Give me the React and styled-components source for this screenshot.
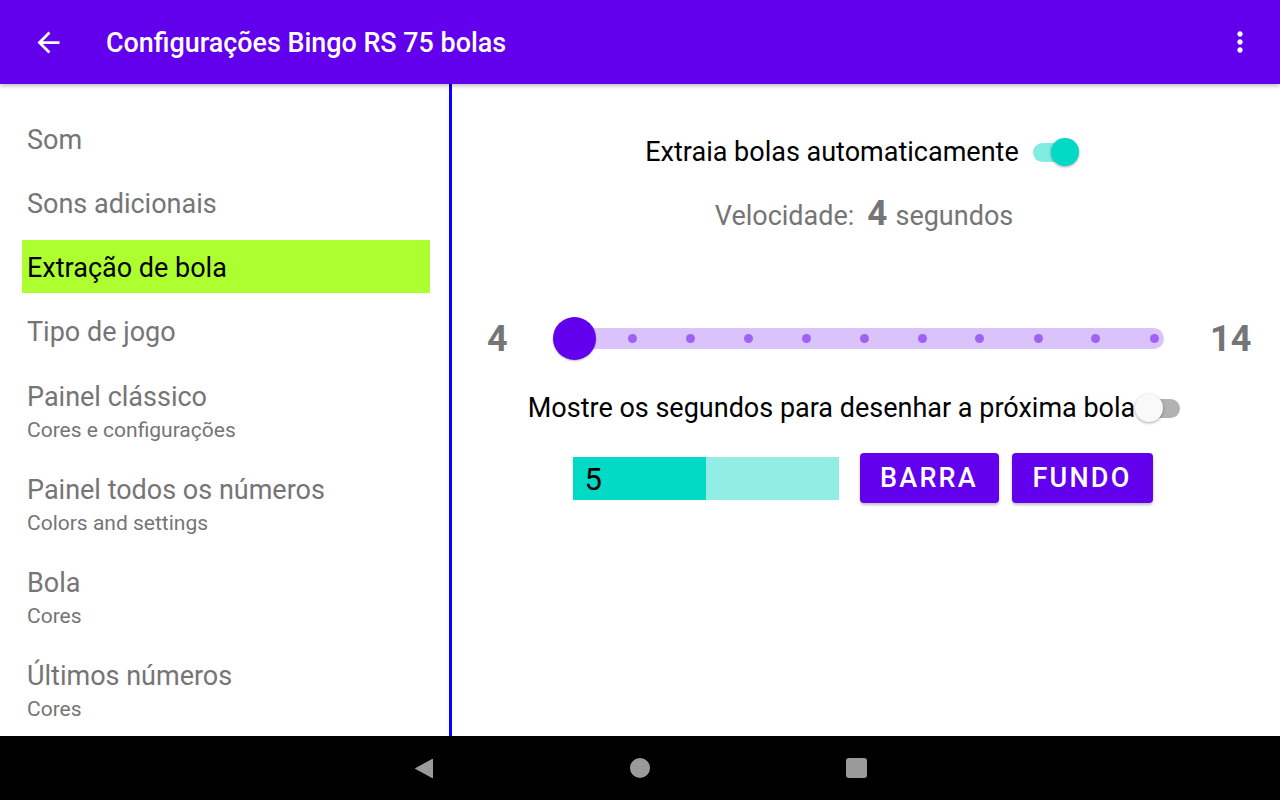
import React from 'react';
import styled, { createGlobalStyle } from 'styled-components';

const GlobalStyle = createGlobalStyle`
  html, body {
    margin: 0;
    padding: 0;
    height: 100%;
    overflow: hidden;
  }
  body {
    font-family: Roboto, "Noto Sans", sans-serif;
    background: #fff;
  }
`;

const Screen = styled.div`
  width: 1280px;
  height: 800px;
  display: flex;
  flex-direction: column;
`;

const AppBar = styled.header`
  height: 84px;
  flex: none;
  background: #6200ee;
  display: flex;
  align-items: center;
  padding: 0 24px 0 32px;
  box-shadow: 0 2px 4px rgba(0, 0, 0, 0.25);
  position: relative;
  z-index: 2;
  color: #fff;
`;

const IconButton = styled.div`
  width: 33px;
  height: 33px;
  display: flex;
  align-items: center;
  justify-content: center;
  flex: none;
`;

const Title = styled.h1`
  margin: 2px 0 0 41px;
  flex: 1;
  font-size: 26.9px;
  font-weight: 500;
`;

const Body = styled.main`
  flex: 1;
  display: flex;
  min-height: 0;
`;

const SideList = styled.nav`
  width: 452px;
  flex: none;
  box-sizing: border-box;
  border-right: 3px solid #0800ff;
  padding-top: 28px;
  display: flex;
  flex-direction: column;
  gap: 11px;
`;

const Item = styled.div`
  margin: 0 19px 0 22px;
  padding: ${(p) => (p.$sub ? '13px 5px 8px' : '2px 5px 0')};
  min-height: 53px;
  box-sizing: border-box;
  display: flex;
  flex-direction: column;
  justify-content: ${(p) => (p.$sub ? 'flex-start' : 'center')};
  background: ${(p) => (p.$active ? '#adff2f' : 'transparent')};
`;

const ItemTitle = styled.div`
  font-size: 27px;
  line-height: 32px;
  color: ${(p) => (p.$active ? '#000' : '#757575')};
`;

const ItemSub = styled.div`
  margin-top: 5px;
  font-size: 21px;
  line-height: 24px;
  color: #757575;
`;

const Pane = styled.section`
  flex: 1;
  display: flex;
  flex-direction: column;
  align-items: center;
  padding-top: 48px;
`;

const Row = styled.div`
  height: ${(p) => p.$h || 40}px;
  margin-top: ${(p) => p.$mt || 0}px;
  margin-right: ${(p) => p.$shift || 0}px;
  display: flex;
  align-items: center;
  justify-content: center;
  gap: ${(p) => p.$gap || 0}px;
  flex: none;
`;

const Label = styled.span`
  font-size: 27px;
  color: #000;
`;

const Speed = styled.div`
  font-size: 27px;
  color: #757575;
  display: flex;
  align-items: baseline;
`;

const SpeedValue = styled.b`
  font-size: 35px;
  font-weight: 700;
  margin: 0 8px 0 13px;
`;

const SwitchWrap = styled.div`
  position: relative;
  width: 47px;
  height: 28px;
  flex: none;
`;

const SwitchTrack = styled.div`
  position: absolute;
  left: 1px;
  right: 2px;
  top: 5px;
  height: 19px;
  border-radius: 10px;
  background: ${(p) => (p.$on ? '#81ece2' : '#b2b2b2')};
`;

const SwitchThumb = styled.div`
  position: absolute;
  top: 0;
  ${(p) => (p.$on ? 'right: 0;' : 'left: 0;')}
  width: 28px;
  height: 28px;
  border-radius: 50%;
  background: ${(p) => (p.$on ? '#03dac5' : '#f9f9f9')};
  box-shadow: 0 1px 3px rgba(0, 0, 0, 0.35);
`;

const SliderRow = styled.div`
  align-self: stretch;
  margin-top: 83px;
  height: 44px;
  display: grid;
  grid-template-columns: 20px 1fr 40px;
  column-gap: 45px;
  align-items: center;
  padding: 0 30px 0 35px;
`;

const SliderLabel = styled.span`
  font-size: 36px;
  font-weight: 700;
  color: #757575;
  text-align: ${(p) => p.$align || 'left'};
  line-height: 44px;
  margin-top: 1px;
`;

const SliderTrack = styled.div`
  position: relative;
  height: 21px;
  border-radius: 11px;
  background: #d9c3fa;
  margin: 0 1px 0 1px;
`;

const Tick = styled.span`
  position: absolute;
  top: 6px;
  width: 9px;
  height: 9px;
  border-radius: 50%;
  background: #9f62f2;
`;

const SliderThumb = styled.span`
  position: absolute;
  top: -11px;
  width: 43px;
  height: 43px;
  margin-left: -21px;
  border-radius: 50%;
  background: #6200ee;
  box-shadow: 0 1px 2px rgba(0, 0, 0, 0.25);
`;

const Progress = styled.div`
  width: 266px;
  height: 43px;
  background: #92ede5;
  position: relative;
  display: flex;
  align-items: center;
`;

const ProgressFill = styled.div`
  position: absolute;
  left: 0;
  top: 0;
  bottom: 0;
  background: #03dac5;
`;

const ProgressText = styled.span`
  position: relative;
  font-size: 31px;
  color: #000;
  padding-left: 12px;
  margin-top: 2px;
`;

const Button = styled.button`
  height: 50px;
  width: ${(p) => p.$w}px;
  border: none;
  border-radius: 4px;
  background: #6200ee;
  color: #fff;
  font-family: Roboto, sans-serif;
  font-weight: 500;
  font-size: 27px;
  letter-spacing: 2.2px;
  box-shadow: 0 2px 3px rgba(0, 0, 0, 0.25);
  padding: 0;
`;

const NavBar = styled.footer`
  height: 64px;
  flex: none;
  background: #000;
  display: flex;
  align-items: center;
  justify-content: center;
  gap: 196px;
`;

const items = [
  { title: 'Som' },
  { title: 'Sons adicionais' },
  { title: 'Extração de bola', active: true },
  { title: 'Tipo de jogo' },
  { title: 'Painel clássico', sub: 'Cores e configurações' },
  { title: 'Painel todos os números', sub: 'Colors and settings' },
  { title: 'Bola', sub: 'Cores' },
  { title: 'Últimos números', sub: 'Cores' },
];

const Switch = ({ on }) => (
  <SwitchWrap>
    <SwitchTrack $on={on} />
    <SwitchThumb $on={on} />
  </SwitchWrap>
);

// track inset: thumb centre sits 21px from the left end, last step 10px from the right
const stepPos = (f) => `calc(21px + (100% - 31px) * ${f})`;

export default function App() {
  const min = 4;
  const max = 14;
  const value = 4;
  const steps = Array.from({ length: max - min }, (_, i) => i + 1);
  const fillPct = 50;

  return (
    <Screen>
      <GlobalStyle />
      <AppBar>
        <IconButton>
          <svg width="33" height="33" viewBox="0 0 24 24" fill="#fff">
            <path d="M20 11H7.83l5.59-5.59L12 4l-8 8 8 8 1.41-1.41L7.83 13H20v-2z" />
          </svg>
        </IconButton>
        <Title>Configurações Bingo RS 75 bolas</Title>
        <svg width="32" height="32" viewBox="0 0 24 24" fill="#fff">
          <path d="M12 8c1.1 0 2-.9 2-2s-.9-2-2-2-2 .9-2 2 .9 2 2 2zm0 2c-1.1 0-2 .9-2 2s.9 2 2 2 2-.9 2-2-.9-2-2-2zm0 6c-1.1 0-2 .9-2 2s.9 2 2 2 2-.9 2-2-.9-2-2-2z" />
        </svg>
      </AppBar>

      <Body>
        <SideList>
          {items.map((it) => (
            <Item key={it.title} $sub={!!it.sub} $active={it.active}>
              <ItemTitle $active={it.active}>{it.title}</ItemTitle>
              {it.sub && <ItemSub>{it.sub}</ItemSub>}
            </Item>
          ))}
        </SideList>

        <Pane>
          <Row $gap={13} $shift={8}>
            <Label>Extraia bolas automaticamente</Label>
            <Switch on />
          </Row>
          <Row $mt={21} $shift={4}>
            <Speed>
              Velocidade:<SpeedValue>{value}</SpeedValue>segundos
            </Speed>
          </Row>

          <SliderRow>
            <SliderLabel>{min}</SliderLabel>
            <SliderTrack>
              {steps.map((s) => (
                <Tick key={s} style={{ left: stepPos(s / (max - min)), marginLeft: -4.5 }} />
              ))}
              <SliderThumb style={{ left: stepPos((value - min) / (max - min)) }} />
            </SliderTrack>
            <SliderLabel $align="right">{max}</SliderLabel>
          </SliderRow>

          <Row $mt={28} $shift={22}>
            <Label>Mostre os segundos para desenhar a próxima bola</Label>
            <Switch />
          </Row>

          <Row $mt={25} $h={50} $gap={21} $shift={7}>
            <Progress>
              <ProgressFill style={{ width: `${fillPct}%` }} />
              <ProgressText>5</ProgressText>
            </Progress>
            <Button $w={139}>BARRA</Button>
            <Button $w={141} style={{ marginLeft: -8 }}>FUNDO</Button>
          </Row>
        </Pane>
      </Body>

      <NavBar>
        <svg width="20" height="21" viewBox="0 0 20 21">
          <path d="M19 1.5 L19 19.5 Q19 20.5 18 20 L1.5 11 Q0.5 10.5 1.5 10 L18 1 Q19 0.5 19 1.5 Z" fill="#9a9a9a" />
        </svg>
        <svg width="20" height="20" viewBox="0 0 20 20">
          <circle cx="10" cy="10" r="10" fill="#9a9a9a" />
        </svg>
        <svg width="21" height="20" viewBox="0 0 21 20">
          <rect x="0" y="0" width="21" height="20" rx="3" fill="#9a9a9a" />
        </svg>
      </NavBar>
    </Screen>
  );
}
